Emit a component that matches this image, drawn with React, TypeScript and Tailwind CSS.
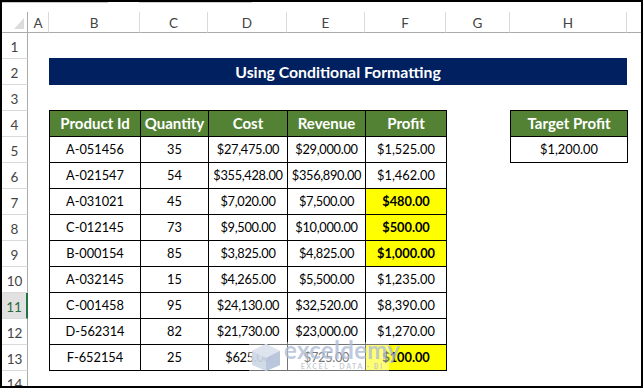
import React from "react";

const colLetters = ["A", "B", "C", "D", "E", "F", "G", "H", ""];
const colStart = [
  "col-start-2",
  "col-start-3",
  "col-start-4",
  "col-start-5",
  "col-start-6",
  "col-start-7",
  "col-start-8",
  "col-start-9",
  "col-start-10",
];
const rowStart = [
  "row-start-2",
  "row-start-3",
  "row-start-4",
  "row-start-5",
  "row-start-6",
  "row-start-7",
  "row-start-8",
  "row-start-9",
  "row-start-10",
  "row-start-11",
  "row-start-12",
  "row-start-13",
  "row-start-14",
  "row-start-15",
];

type Row = { id: string; qty: string; cost: string; rev: string; profit: string; hit: boolean };

const data: Row[] = [
  { id: "A-051456", qty: "35", cost: "$27,475.00", rev: "$29,000.00", profit: "$1,525.00", hit: false },
  { id: "A-021547", qty: "54", cost: "$355,428.00", rev: "$356,890.00", profit: "$1,462.00", hit: false },
  { id: "A-031021", qty: "45", cost: "$7,020.00", rev: "$7,500.00", profit: "$480.00", hit: true },
  { id: "C-012145", qty: "73", cost: "$9,500.00", rev: "$10,000.00", profit: "$500.00", hit: true },
  { id: "B-000154", qty: "85", cost: "$3,825.00", rev: "$4,825.00", profit: "$1,000.00", hit: true },
  { id: "A-032145", qty: "15", cost: "$4,265.00", rev: "$5,500.00", profit: "$1,235.00", hit: false },
  { id: "C-001458", qty: "95", cost: "$24,130.00", rev: "$32,520.00", profit: "$8,390.00", hit: false },
  { id: "D-562314", qty: "82", cost: "$21,730.00", rev: "$23,000.00", profit: "$1,270.00", hit: false },
  { id: "F-652154", qty: "25", cost: "$625.00", rev: "$725.00", profit: "$100.00", hit: true },
];

const headers = ["Product Id", "Quantity", "Cost", "Revenue", "Profit"];

function Cell({ children, className = "" }: { children?: React.ReactNode; className?: string }) {
  return (
    <div className={`flex items-center justify-center whitespace-nowrap ${className}`}>{children}</div>
  );
}

export default function App() {
  return (
    <div className="relative w-[643px] h-[388px] border-2 border-black bg-white overflow-hidden flex flex-col font-['Lato','Noto_Sans',sans-serif] text-black">
      {/* top strip remnants */}
      <div className="h-[10px] flex shrink-0">
        <div className="w-[106px] h-px bg-[#c8c8c8]" />
        <div className="w-[31px]" />
        <div className="w-[113px] h-px bg-[#d0d0d0]" />
      </div>

      {/* sheet grid */}
      <div className="grid grid-cols-[26px_21px_91px_68px_79px_78px_81px_64px_117px_1fr] grid-rows-[21px_repeat(13,26px)_1fr] flex-1 min-h-0">
        {/* corner */}
        <div className="col-start-1 row-start-1 relative border-r border-b border-[#ababab]">
          <div className="absolute right-[3px] bottom-[3px] w-0 h-0 border-l-[10px] border-l-transparent border-b-[11px] border-b-[#dcdcdc]" />
        </div>

        {/* column headers */}
        {colLetters.map((l, i) => (
          <div
            key={i}
            className={`${colStart[i]} row-start-1 flex items-center justify-center border-b border-[#ababab] ${
              i < 8 ? "border-r border-r-[#dadada]" : ""
            } text-[13.5px] text-[#444] pt-[2px]`}
          >
            {l}
          </div>
        ))}

        {/* row headers */}
        {rowStart.map((r, i) => {
          const sel = i === 10;
          return (
            <div
              key={r}
              className={`col-start-1 ${r} flex items-center justify-center text-[13.5px] pt-[3px] border-b border-[#dadada] ${
                sel
                  ? "bg-[#e1e1e1] text-[#2c6a40] border-r-2 border-r-[#217346]"
                  : "text-[#444] border-r border-r-[#ababab]"
              }`}
            >
              {i + 1}
            </div>
          );
        })}

        {/* title */}
        <div className="col-start-3 col-span-7 row-start-3 -mt-px h-[27px] self-start bg-[#002060] flex items-center justify-center text-white font-bold text-[15.8px]">
          Using Conditional Formatting
        </div>

        {/* main table */}
        <div className="col-start-3 col-span-5 row-start-5 row-span-10 -mt-px self-start justify-self-start w-[398px] h-[261px] bg-black p-px gap-px grid grid-cols-[90px_67px_78px_77px_80px] grid-rows-[repeat(10,25px)]">
          {headers.map((h) => (
            <Cell key={h} className="bg-[#548235] text-white font-bold text-[15px]">
              {h}
            </Cell>
          ))}
          {data.map((r) => (
            <React.Fragment key={r.id}>
              <Cell className="bg-white text-[12.8px]">{r.id}</Cell>
              <Cell className="bg-white text-[12.8px]">{r.qty}</Cell>
              <Cell className="bg-white text-[12.8px] tracking-[-0.3px]">{r.cost}</Cell>
              <Cell className="bg-white text-[12.8px] tracking-[-0.3px]">{r.rev}</Cell>
              <Cell className={`text-[12.8px] ${r.hit ? "bg-[#ffff00] font-bold" : "bg-white"}`}>{r.profit}</Cell>
            </React.Fragment>
          ))}
        </div>

        {/* target profit */}
        <div className="col-start-9 row-start-5 row-span-2 -mt-px self-start justify-self-start w-[118px] h-[53px] bg-black p-px gap-px grid grid-rows-[25px_25px]">
          <Cell className="bg-[#548235] text-white font-bold text-[15px]">Target Profit</Cell>
          <Cell className="bg-white text-[12.8px]">$1,200.00</Cell>
        </div>
      </div>

      {/* watermark */}
      <div className="absolute left-[247px] top-[340px] w-[140px] h-[30px] bg-white/45 flex items-center pointer-events-none">
        <svg width="34" height="30" viewBox="0 0 34 30" className="shrink-0">
          <polygon points="17,2 31,9 31,23 17,29 3,23 3,9" fill="#c9d3e3" opacity="0.85" />
          <polygon points="17,2 31,9 17,16 3,9" fill="#dfe6f0" opacity="0.9" />
          <polygon points="17,16 31,9 31,23 17,29" fill="#b3c1d8" opacity="0.8" />
        </svg>
        <div className="flex flex-col items-center leading-none ml-[1px]">
          <span className="text-[24px] font-bold text-[#aebcd6]/80 tracking-[0.3px] -mt-[6px]">exceldemy</span>
          <span className="text-[7px] font-bold text-[#b9bec8]/80 tracking-[1.6px] mt-[1px]">EXCEL · DATA · BI</span>
        </div>
      </div>
    </div>
  );
}
